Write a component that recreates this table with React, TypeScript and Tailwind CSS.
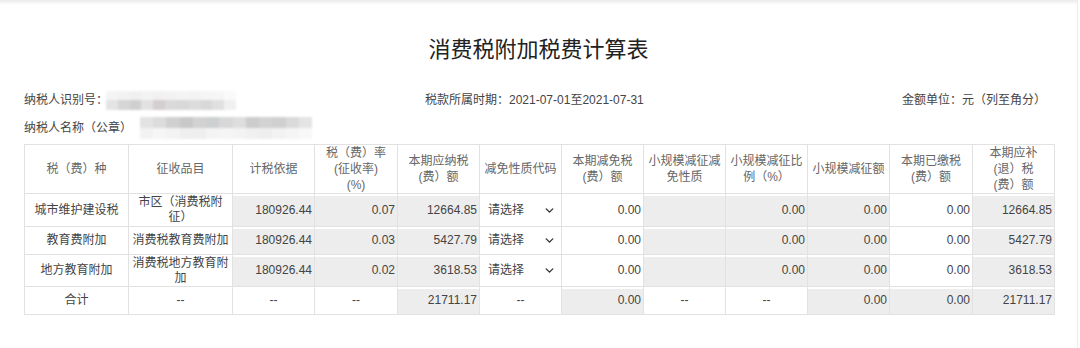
import { ChevronDown } from 'lucide-react';

const font = { fontFamily: '"Liberation Sans", "Noto Sans CJK SC", sans-serif' };

type Cell = { v?: string; gray?: boolean; select?: boolean; align?: 'r' | 'c' };

const colWidths = [104, 104, 82, 83, 82, 82, 82, 82, 82, 82, 83, 82];

const headers: string[][] = [
  ['税（费）种'],
  ['征收品目'],
  ['计税依据'],
  ['税（费）率', '(征收率)', '(%)'],
  ['本期应纳税', '(费）额'],
  ['减免性质代码'],
  ['本期减免税', '(费）额'],
  ['小规模减征减', '免性质'],
  ['小规模减征比', '例（%）'],
  ['小规模减征额'],
  ['本期已缴税', '(费）额'],
  ['本期应补', '(退）税', '(费）额'],
];

const dataRow = (name: string, item: string[], base: string, rate: string, tax: string): Cell[] => [
  { v: name, align: 'c' },
  { v: item.join('\n'), align: 'c' },
  { v: base, gray: true },
  { v: rate, gray: true },
  { v: tax, gray: true },
  { select: true },
  { v: '0.00' },
  { gray: true },
  { v: '0.00', gray: true },
  { v: '0.00', gray: true },
  { v: '0.00' },
  { v: tax, gray: true },
];

const rows: { h: number; cells: Cell[] }[] = [
  { h: 33, cells: dataRow('城市维护建设税', ['市区（消费税附', '征）'], '180926.44', '0.07', '12664.85') },
  { h: 28, cells: dataRow('教育费附加', ['消费税教育费附加'], '180926.44', '0.03', '5427.79') },
  { h: 32, cells: dataRow('地方教育附加', ['消费税地方教育附', '加'], '180926.44', '0.02', '3618.53') },
  {
    h: 28,
    cells: [
      { v: '合计', align: 'c' },
      { v: '--', align: 'c' },
      { v: '--', align: 'c' },
      { v: '--', align: 'c' },
      { v: '21711.17', gray: true },
      { v: '--', align: 'c' },
      { v: '0.00', gray: true },
      { v: '--', align: 'c' },
      { v: '--', align: 'c' },
      { v: '0.00', gray: true },
      { v: '0.00', gray: true },
      { v: '21711.17', gray: true },
    ],
  },
];

const Blurred = ({ shades, w, h }: { shades: string[][]; w: number; h: number }) => (
  <div className="flex flex-col blur-[1px]" style={{ width: w, height: h }}>
    {shades.map((line, i) => (
      <div key={i} className="flex flex-1">
        {line.map((c, j) => (
          <div key={j} className="flex-1" style={{ background: c }} />
        ))}
      </div>
    ))}
  </div>
);

const idShades = [
  ['#f4f4f4', '#f2f2f2', '#f0f0f0', '#f3f3f3', '#f1f1f1', '#f2f2f2', '#f4f4f4', '#f3f3f3', '#f5f5f5', '#f6f6f6', '#fafafa'],
  ['#e4e4e4', '#d6d6d6', '#cfcfcf', '#e2e2e2', '#d4cece', '#dadada', '#d8d8d8', '#dcdcdc', '#d8d8d8', '#e0e0e0', '#f0f0f0'],
];

const nameShades = [
  ['#e3e3e3', '#dcdcdc', '#d0d0d0', '#c8c8c8', '#d2d2d2', '#cdd0d0', '#d8d8d8', '#dedede', '#cccccc', '#d3d3d3', '#d0d0d0', '#dadada', '#e4e4e4'],
  ['#f2f2f2', '#f6f6f6', '#f3f3f3', '#efefef', '#eeeeee', '#f4f4f4', '#f5f5f5', '#f3f3f3', '#f0f0f0', '#eeeeee', '#f2f2f2', '#f5f5f5', '#f8f8f8'],
];

export default function App() {
  return (
    <div className="w-[1080px] h-[348px] bg-white text-[#333]" style={font}>
      <div className="w-[1078px] h-full border-r border-[#ececec] relative">
        <div className="h-[5px] bg-gradient-to-b from-[#ebebeb] to-white" />
        <h1 className="mt-[27px] text-center text-[22px] leading-[30px] text-[#222]" style={{ fontFamily: '"Noto Sans CJK SC", sans-serif' }}>
          消费税附加税费计算表
        </h1>

        <div className="mt-[28px] pl-[24px] w-[1054px] text-[12px] text-[#444]">
          <div className="flex items-center h-[20px]">
            <div className="w-[401px] flex items-center">
              <span>纳税人识别号：</span>
              <div className="ml-[-2px]">
                <Blurred shades={idShades} w={130} h={19} />
              </div>
            </div>
            <span>税款所属时期：2021-07-01至2021-07-31</span>
            <span className="ml-auto pr-[8px]">金额单位：元（列至角分）</span>
          </div>
          <div className="flex items-center h-[20px] mt-[8px]">
            <span>纳税人名称（公章）</span>
            <div className="ml-[8px]">
              <Blurred shades={nameShades} w={172} h={22} />
            </div>
          </div>
        </div>

        <div className="pl-[24px] mt-[6px]">
          <table className="border-collapse table-fixed text-[12px] w-[1030px]">
            <colgroup>
              {colWidths.map((w, i) => (
                <col key={i} style={{ width: w }} />
              ))}
            </colgroup>
            <thead>
              <tr className="h-[48px]">
                {headers.map((lines, i) => (
                  <th
                    key={i}
                    className="border border-[#e2e2e2] font-normal text-[#666] leading-[16px] text-center align-middle px-0"
                  >
                    {lines.map((l, j) => (
                      <div key={j}>{l}</div>
                    ))}
                  </th>
                ))}
              </tr>
            </thead>
            <tbody>
              {rows.map((r, ri) => (
                <tr key={ri} style={{ height: r.h }}>
                  {r.cells.map((c, ci) => (
                    <td
                      key={ci}
                      className={`border border-[#e2e2e2] p-0 align-middle text-[#444] leading-[15px] ${
                        c.gray ? 'bg-[#ededed] shadow-[inset_0_2px_0_#ffffff]' : 'bg-white'
                      }`}
                    >
                      {c.select ? (
                        <div className="flex items-center justify-between pl-[8px] pr-[5px]">
                          <span>请选择</span>
                          <ChevronDown size={13} strokeWidth={2.6} className="text-[#333]" />
                        </div>
                      ) : (
                        <div
                          className={`whitespace-pre-line ${
                            c.align === 'c' ? 'text-center' : 'text-right pr-[2px]'
                          }`}
                        >
                          {c.v}
                        </div>
                      )}
                    </td>
                  ))}
                </tr>
              ))}
            </tbody>
          </table>
        </div>
      </div>
    </div>
  );
}
